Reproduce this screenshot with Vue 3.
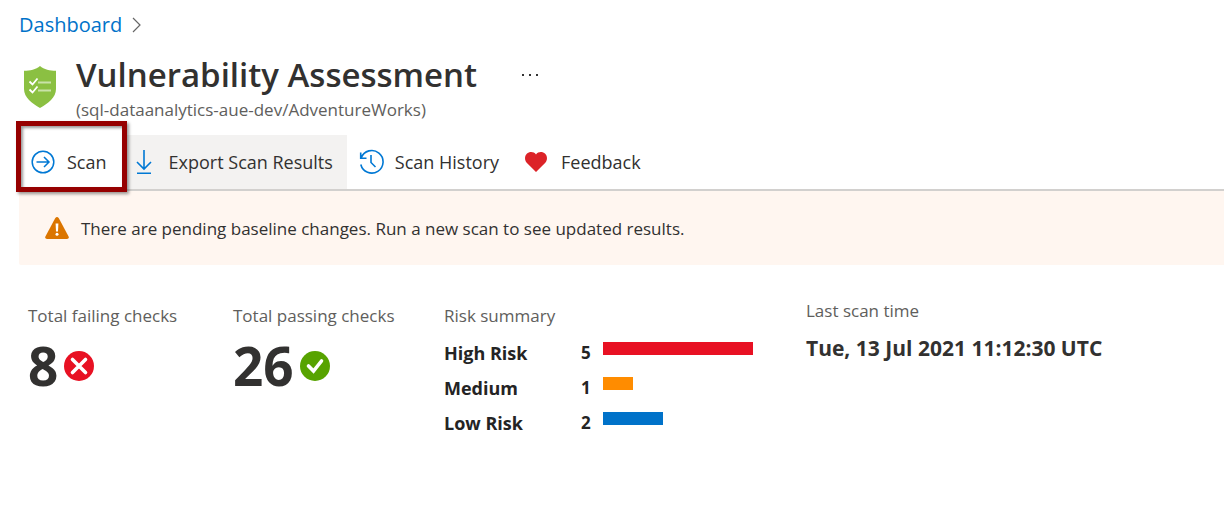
<script setup>
const risks = [
  { name: 'High Risk', count: 5, color: '#e81123' },
  { name: 'Medium', count: 1, color: '#ff8c00' },
  { name: 'Low Risk', count: 2, color: '#0072c9' },
]
const unit = 30
</script>

<template>
  <main class="page">
    <nav class="crumbs" aria-label="Breadcrumb">
      <a href="#">Dashboard</a>
      <svg width="10" height="18" viewBox="0 0 10 18" aria-hidden="true">
        <path d="M1 2 8 9 1 16" fill="none" stroke="#666" stroke-width="1.2" />
      </svg>
    </nav>

    <header class="heading">
      <svg class="shield" width="32" height="42" viewBox="0 0 32 42" aria-hidden="true">
        <path d="M16 0C12 3.600 6 4.800 0 4.800V23C0 31.500 8 37.500 16 42 24 37.500 32 31.500 32 23V4.800C26 4.800 20 3.600 16 0Z" fill="#8bc042" />
        <path d="M14 16.500H27M14 24.500H27" stroke="#c9e2a8" stroke-width="1.8" />
        <path d="M5.500 15.500 8.500 18.500 13.500 12.500M5.500 23.500 8.500 26.500 13.500 20.500" fill="none" stroke="#fff" stroke-width="1.8" />
      </svg>
      <div>
        <div class="title-row">
          <h1>Vulnerability Assessment</h1>
          <button class="more" type="button" aria-label="More actions">
            <svg width="18" height="4" viewBox="0 0 18 4" aria-hidden="true">
              <path d="M1 1H3V3H1ZM8 1H10V3H8ZM15 1H17V3H15Z" fill="#333" />
            </svg>
          </button>
        </div>
        <p class="subtitle">(sql-dataanalytics-aue-dev/AdventureWorks)</p>
      </div>
    </header>

    <div class="toolbar" role="toolbar" aria-label="Scan actions">
      <button class="tool scan" type="button">
        <svg width="24" height="24" viewBox="0 0 24 24" fill="none" stroke="#0078d4" stroke-width="1.5" aria-hidden="true">
          <circle cx="12" cy="12" r="10.800" />
          <path d="M5.500 12H18M13 7 18 12 13 17" />
        </svg>
        Scan
      </button>
      <button class="tool export" type="button">
        <svg width="16" height="26" viewBox="0 0 16 26" fill="none" stroke="#0078d4" stroke-width="1.600" aria-hidden="true">
          <path d="M8 1V20M1 13 8 20 15 13M1 24.200H15" />
        </svg>
        Export Scan Results
      </button>
      <button class="tool history" type="button">
        <svg width="26" height="26" viewBox="0 0 26 26" fill="none" stroke="#0078d4" stroke-width="1.600" aria-hidden="true">
          <path d="M2.200 8.800A11.300 11.300 0 1 1 1.800 15.500M1.700 3.500V9.200H7.500M12 6V13.500L16.500 18" />
        </svg>
        Scan History
      </button>
      <button class="tool feedback" type="button">
        <svg width="22" height="20" viewBox="0 0 22 20" aria-hidden="true">
          <path d="M11 20 1.700 10.700C-.6 8.200-.5 4.200 1.800 1.800 4.400-.7 8.700-.6 11 2.400 13.300-.6 17.600-.7 20.200 1.800 22.500 4.200 22.600 8.200 20.300 10.700Z" fill="#dc2328" />
        </svg>
        Feedback
      </button>
    </div>

    <div class="banner" role="status">
      <svg width="24" height="22" viewBox="0 0 24 22" aria-hidden="true">
        <path d="M10.300 1Q12-1 13.700 1L23.600 19.500Q24.300 22 22 22H2Q-.3 22 .4 19.500Z" fill="#db7500" />
        <path d="M10.600 6.500H13.400L13 14.500H11Z" fill="#fff" />
        <circle cx="12" cy="17.200" r="1.500" fill="#fff" />
      </svg>
      <span>There are pending baseline changes. Run a new scan to see updated results.</span>
    </div>

    <div class="stats">
      <section>
        <h2>Total failing checks</h2>
        <div class="big">
          <span>8</span>
          <svg width="30" height="30" viewBox="0 0 30 30" aria-hidden="true">
            <circle cx="15" cy="15" r="15" fill="#e81123" />
            <path d="M8.500 8.500 21.500 21.500M21.500 8.500 8.500 21.500" stroke="#fff" stroke-width="3.600" stroke-linecap="round" />
          </svg>
        </div>
      </section>
      <section>
        <h2>Total passing checks</h2>
        <div class="big">
          <span>26</span>
          <svg width="30" height="30" viewBox="0 0 30 30" aria-hidden="true">
            <circle cx="15" cy="15" r="15" fill="#57a300" />
            <path d="M8.500 15 13.500 20 21.500 10" fill="none" stroke="#fff" stroke-width="3.600" stroke-linecap="round" />
          </svg>
        </div>
      </section>
      <section>
        <h2 id="risk-title">Risk summary</h2>
        <table class="risks" aria-labelledby="risk-title">
          <tbody>
            <tr v-for="r in risks" :key="r.name">
              <th scope="row">{{ r.name }}</th>
              <td class="count">{{ r.count }}</td>
              <td><div class="bar" :style="{ width: r.count * unit + 'px', background: r.color }"></div></td>
            </tr>
          </tbody>
        </table>
      </section>
      <section class="last">
        <h2>Last scan time</h2>
        <p class="time">Tue, 13 Jul 2021 11:12:30 UTC</p>
      </section>
    </div>
  </main>
</template>

<style>
body {
  background: #fff;
}
</style>

<style scoped>
.page {
  font-family: "Open Sans", "Noto Sans", sans-serif;
  color: #323130;
  padding: 12px 0 0 19px;
}
h1, h2, p {
  margin: 0;
}
svg {
  display: block;
  flex: none;
}
button {
  border: 0;
  background: none;
  padding: 0;
  color: inherit;
  font-family: inherit;
  cursor: pointer;
}
.crumbs {
  display: flex;
  align-items: center;
  gap: 10px;
  font-size: 20px;
  line-height: 26px;
}
.crumbs a {
  color: #0072c9;
  text-decoration: none;
}
.heading {
  display: flex;
  gap: 20px;
  padding: 14px 0 0 5px;
}
.shield {
  margin-top: 14px;
}
.title-row {
  display: flex;
  align-items: center;
  gap: 44px;
}
h1 {
  font-size: 33px;
  font-weight: 600;
  line-height: 46px;
}
.subtitle {
  font-size: 17px;
  line-height: 24px;
  color: #605e5c;
}
.toolbar {
  display: flex;
  height: 54px;
  margin-top: 13px;
  border-bottom: 2px solid #d2d0ce;
}
.tool {
  display: flex;
  align-items: center;
  font-size: 18px;
}
.scan {
  position: relative;
  gap: 12px;
  padding: 0 20px 0 12px;
}
.scan::after {
  content: "";
  position: absolute;
  inset: -14px 0 -3px -3px;
  border: 5px solid #960000;
  box-shadow: 2px 2px 3px #00000066, inset 2px 2px 3px #00000066;
}
.export {
  gap: 17px;
  padding: 0 14px 0 9px;
  background: #f3f2f1;
}
.history {
  gap: 10px;
  padding: 0 14px 0 12px;
}
.feedback {
  gap: 14px;
  padding: 0 12px;
}
.banner {
  display: flex;
  align-items: center;
  gap: 12px;
  height: 74px;
  padding-left: 26px;
  border-radius: 2px 0 0 2px;
  background: #fff6f0;
  font-size: 17px;
}
.stats {
  display: grid;
  grid-template-columns: 205px 211px 362px 1fr;
  padding: 39px 0 0 9px;
}
h2 {
  font-size: 17px;
  font-weight: 400;
  line-height: 24px;
  color: #605e5c;
}
.big {
  display: flex;
  align-items: center;
  gap: 6px;
  margin-top: 8px;
  font-size: 53px;
  font-weight: 700;
  line-height: 60px;
}
.risks {
  margin-top: 7px;
  border-collapse: collapse;
  color: #242424;
}
.risks tr {
  height: 35px;
}
.risks th,
.risks td {
  padding: 0;
  text-align: left;
  font-size: 18px;
  font-weight: 700;
  line-height: 34px;
}
.risks th {
  width: 137px;
}
.risks .count {
  width: 22px;
  font-size: 17px;
}
.bar {
  height: 13px;
  margin-bottom: 8px;
}
.last {
  margin-top: -5px;
}
.time {
  margin-top: 12px;
  font-size: 21px;
  font-weight: 700;
  line-height: 26px;
}
</style>
